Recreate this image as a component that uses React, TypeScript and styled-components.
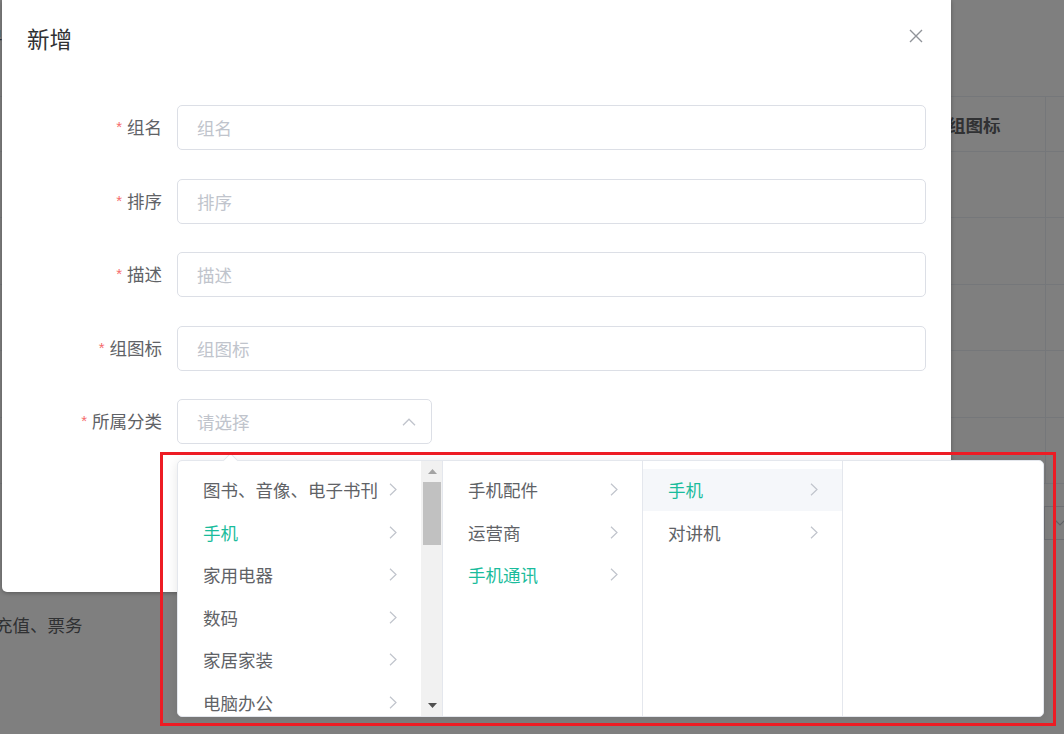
import React from "react";
import styled, { createGlobalStyle } from "styled-components";

const GlobalStyle = createGlobalStyle`
  html, body { margin: 0; padding: 0; background: #fff; }
  body { font-family: "Noto Sans CJK SC", "Noto Sans", sans-serif; }
  * { box-sizing: border-box; }
`;

const TEAL = "#1abc9c";
const TEXT = "#606266";

const Page = styled.div`
  position: relative;
  width: 1064px;
  height: 734px;
  overflow: hidden;
  background: #fff;
  font-size: 17.5px;
`;

/* ---------- background page ---------- */
const Backdrop = styled.div`
  display: flex;
  flex-direction: column;
  width: 100%;
  height: 100%;
  color: ${TEXT};
`;

const TopBar = styled.div`
  height: 96px;
  line-height: 70px;
  margin-left: -15px;
`;

const Table = styled.div`
  display: grid;
  grid-template-columns: 933px 113px 1fr;
  grid-template-rows: 55px repeat(5, 66.4px);
  border-top: 1px solid #ebeef5;
`;

const Cell = styled.div<{ $mid?: boolean; $head?: boolean }>`
  border-bottom: 1px solid #ebeef5;
  border-right: ${(p) => (p.$mid ? "1px solid #ebeef5" : "none")};
  padding-left: 15px;
  display: flex;
  align-items: center;
  font-weight: ${(p) => (p.$head ? 700 : 400)};
  color: ${TEXT};
`;

const PagerRow = styled.div`
  height: 56px;
  padding-top: 22px;
  padding-left: 1044px;
`;

const PagerSelect = styled.div`
  height: 34px;
  width: 40px;
  border: 1px solid #dcdfe6;
  border-right: none;
  display: flex;
  align-items: center;
  padding-left: 9px;
`;

const FootText = styled.div`
  margin-top: 74px;
  margin-left: -5px;
  line-height: 22px;
`;

const Overlay = styled.div`
  position: absolute;
  inset: 0;
  background: rgba(0, 0, 0, 0.5);
`;

/* ---------- dialog ---------- */
const Dialog = styled.div`
  position: absolute;
  left: 2px;
  top: 0;
  width: 949px;
  height: 592px;
  background: #fff;
  border-radius: 0 0 5px 5px;
  box-shadow: 0 1px 4px rgba(0, 0, 0, 0.3);
`;

const DialogHeader = styled.div`
  display: flex;
  align-items: flex-start;
  justify-content: space-between;
  padding: 25px 25px 12.5px 25px;
`;

const Title = styled.span`
  font-size: 22.5px;
  line-height: 30px;
  margin-top: -2px;
  margin-bottom: 2px;
  color: #303133;
`;

const CloseButton = styled.button`
  width: 20px;
  height: 20px;
  margin-top: 1px;
  padding: 0;
  border: none;
  background: transparent;
  display: flex;
  align-items: center;
  justify-content: center;
`;

const DialogBody = styled.div`
  padding: 37.5px 25px 0 25px;
  display: flex;
  flex-direction: column;
  gap: 28.5px;
`;

const FormRow = styled.div`
  display: flex;
  align-items: center;
  height: 45px;
`;

const Label = styled.label`
  width: 150px;
  padding-right: 15px;
  text-align: right;
  font-size: 17.5px;
  line-height: 45px;
  color: ${TEXT};
  white-space: nowrap;
`;

const Star = styled.span`
  color: #f56c6c;
  font-family: "Liberation Sans", sans-serif;
  font-size: 15px;
  margin-right: 5px;
  position: relative;
  top: -2px;
`;

const Input = styled.input`
  flex: 1;
  height: 45px;
  border: 1px solid #dcdfe6;
  border-radius: 5px;
  padding: 0 19px;
  font-family: inherit;
  font-size: 17.5px;
  color: ${TEXT};
  outline: none;
  background: #fff;
  &::placeholder {
    color: #c0c4cc;
  }
`;

const SelectBox = styled.div`
  width: 255px;
  height: 45px;
  border: 1px solid #dcdfe6;
  border-radius: 5px;
  padding: 0 15px 0 19px;
  display: flex;
  align-items: center;
  justify-content: space-between;
  color: #c0c4cc;
  font-size: 17.5px;
`;

/* ---------- cascader popper ---------- */
const Popper = styled.div`
  position: absolute;
  left: 177px;
  top: 460px;
  width: 867px;
  height: 257px;
  background: #fff;
  border: 1px solid #e4e7ed;
  border-radius: 5px;
  box-shadow: 0 2px 12px rgba(0, 0, 0, 0.1);
  display: flex;
`;

const PopArrow = styled.div`
  position: absolute;
  top: -6.5px;
  left: 47px;
  width: 11px;
  height: 11px;
  background: #fff;
  border-top: 1px solid #e4e7ed;
  border-left: 1px solid #e4e7ed;
  transform: rotate(45deg);
`;

const Panel = styled.div<{ $width: number }>`
  width: ${(p) => p.$width}px;
  height: 100%;
  border-right: 1px solid #e4e7ed;
  display: flex;
  &:last-child {
    border-right: none;
  }
`;

const MenuList = styled.ul`
  flex: 1;
  list-style: none;
  margin: 0;
  padding: 7.5px 0 0 0;
`;

const MenuItem = styled.li<{ $active?: boolean; $hover?: boolean }>`
  height: 42.5px;
  display: flex;
  align-items: center;
  justify-content: space-between;
  padding: 0 24px 0 25px;
  font-size: 17.5px;
  color: ${(p) => (p.$active ? TEAL : TEXT)};
  background: ${(p) => (p.$hover ? "#f5f7fa" : "transparent")};
  white-space: nowrap;
`;

const ScrollTrack = styled.div`
  width: 21px;
  height: 100%;
  background: #f1f1f1;
  display: flex;
  flex-direction: column;
  align-items: center;
  padding: 0 1px 0 2px;
`;

const ScrollBtn = styled.div`
  height: 21px;
  width: 100%;
  display: flex;
  align-items: center;
  justify-content: center;
`;

const ScrollThumb = styled.div`
  width: 100%;
  height: 63px;
  background: #c1c1c1;
`;

const ScrollSpace = styled.div`
  flex: 1;
`;

const Annotation = styled.div`
  position: absolute;
  left: 160px;
  top: 452px;
  width: 896px;
  height: 274px;
  border: 3px solid #ed1c24;
  pointer-events: none;
`;

/* ---------- icons ---------- */
const ChevronRight = () => (
  <svg width="8" height="13" viewBox="0 0 8 13">
    <path d="M1 0.8 L7 6.5 L1 12.2" fill="none" stroke="#c0c4cc" strokeWidth="1.2" />
  </svg>
);

const ChevronUp = () => (
  <svg width="14" height="8" viewBox="0 0 14 8">
    <path d="M1 7.2 L7 1.2 L13 7.2" fill="none" stroke="#c0c4cc" strokeWidth="1.3" />
  </svg>
);

const ChevronDown = () => (
  <svg width="12" height="7" viewBox="0 0 12 7">
    <path d="M1 1 L6 6 L11 1" fill="none" stroke="#c0c4cc" strokeWidth="1.2" />
  </svg>
);

const CloseIcon = () => (
  <svg width="20" height="20" viewBox="0 0 20 20">
    <path d="M4 4 L16 16 M16 4 L4 16" stroke="#909399" strokeWidth="1.4" fill="none" />
  </svg>
);

const Tri = ({ up, color }: { up?: boolean; color: string }) => (
  <svg width="9" height="5" viewBox="0 0 9 5">
    <path d={up ? "M0 5 L4.5 0 L9 5 Z" : "M0 0 L4.5 5 L9 0 Z"} fill={color} />
  </svg>
);

const fields = [
  { label: "组名", ph: "组名" },
  { label: "排序", ph: "排序" },
  { label: "描述", ph: "描述" },
  { label: "组图标", ph: "组图标" },
];

const level1 = ["图书、音像、电子书刊", "手机", "家用电器", "数码", "家居家装", "电脑办公"];
const level2 = ["手机配件", "运营商", "手机通讯"];
const level3 = ["手机", "对讲机"];

export default function App() {
  return (
    <>
      <GlobalStyle />
      <Page>
        <Backdrop>
          <TopBar>单</TopBar>
          <Table>
            <Cell />
            <Cell $mid $head>组图标</Cell>
            <Cell />
            {Array.from({ length: 5 }).map((_, i) => (
              <React.Fragment key={i}>
                <Cell />
                <Cell $mid />
                <Cell />
              </React.Fragment>
            ))}
          </Table>
          <PagerRow>
            <PagerSelect>
              <ChevronDown />
            </PagerSelect>
          </PagerRow>
          <FootText>充值、票务</FootText>
        </Backdrop>

        <Overlay />

        <Dialog>
          <DialogHeader>
            <Title>新增</Title>
            <CloseButton aria-label="close">
              <CloseIcon />
            </CloseButton>
          </DialogHeader>
          <DialogBody>
            {fields.map((f) => (
              <FormRow key={f.label}>
                <Label>
                  <Star>*</Star>
                  {f.label}
                </Label>
                <Input placeholder={f.ph} readOnly />
              </FormRow>
            ))}
            <FormRow>
              <Label>
                <Star>*</Star>
                所属分类
              </Label>
              <SelectBox>
                <span>请选择</span>
                <ChevronUp />
              </SelectBox>
            </FormRow>
          </DialogBody>
        </Dialog>

        <Popper>
          <PopArrow />
          <Panel $width={265}>
            <MenuList>
              {level1.map((t) => (
                <MenuItem key={t} $active={t === "手机"}>
                  <span>{t}</span>
                  <ChevronRight />
                </MenuItem>
              ))}
            </MenuList>
            <ScrollTrack>
              <ScrollBtn>
                <Tri up color="#a3a3a3" />
              </ScrollBtn>
              <ScrollThumb />
              <ScrollSpace />
              <ScrollBtn>
                <Tri color="#505050" />
              </ScrollBtn>
            </ScrollTrack>
          </Panel>
          <Panel $width={200}>
            <MenuList>
              {level2.map((t) => (
                <MenuItem key={t} $active={t === "手机通讯"}>
                  <span>{t}</span>
                  <ChevronRight />
                </MenuItem>
              ))}
            </MenuList>
          </Panel>
          <Panel $width={200}>
            <MenuList>
              {level3.map((t) => (
                <MenuItem key={t} $active={t === "手机"} $hover={t === "手机"}>
                  <span>{t}</span>
                  <ChevronRight />
                </MenuItem>
              ))}
            </MenuList>
          </Panel>
          <Panel $width={200} />
        </Popper>

        <Annotation />
      </Page>
    </>
  );
}
